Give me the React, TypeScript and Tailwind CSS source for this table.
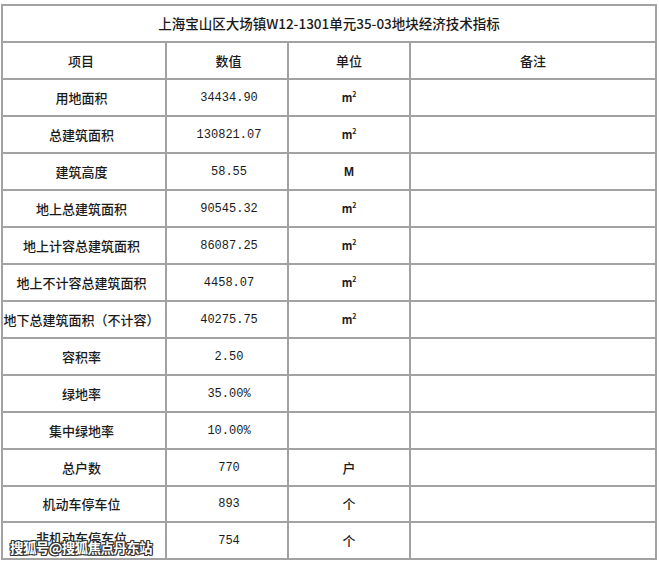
import React from 'react';

type Row = { name: string; value: string; unit: React.ReactNode; short?: boolean; lift?: boolean };

const sqm = (
  <span className="font-bold text-[11px]">
    m<sup className="text-[7px] -top-[5px]">2</sup>
  </span>
);

const rows: Row[] = [
  { name: '用地面积', value: '34434.90', unit: sqm },
  { name: '总建筑面积', value: '130821.07', unit: sqm },
  { name: '建筑高度', value: '58.55', unit: <span className="font-bold text-[12px] [font-family:'Liberation_Sans_Narrow','Liberation_Sans',sans-serif]">M</span> },
  { name: '地上总建筑面积', value: '90545.32', unit: sqm },
  { name: '地上计容总建筑面积', value: '86087.25', unit: sqm },
  { name: '地上不计容总建筑面积', value: '4458.07', unit: sqm },
  { name: '地下总建筑面积（不计容）', value: '40275.75', unit: sqm },
  { name: '容积率', value: '2.50', unit: '' },
  { name: '绿地率', value: '35.00%', unit: '' },
  { name: '集中绿地率', value: '10.00%', unit: '' },
  { name: '总户数', value: '770', unit: '户' },
  { name: '机动车停车位', value: '893', unit: '个', short: true },
  { name: '非机动车停车位', value: '754', unit: '个', lift: true },
];

const cell = 'bg-white flex items-center justify-center whitespace-nowrap';

export default function App() {
  return (
    <div className="relative w-[660px] h-[561px] bg-white overflow-hidden text-[#1a1a1a] [font-family:'Noto_Sans_CJK_SC',sans-serif]">
      <div className="ml-[1px] mt-[4px] w-[656px] grid grid-cols-[162px_120px_120px_244px] gap-[2px] p-[2px] bg-[#a2a2a2]">
        <div className={`${cell} col-span-4 h-[35px] text-[13.5px] font-medium`}>
          上海宝山区大场镇W12-1301单元35-03地块经济技术指标
        </div>
        <div className={`${cell} h-[35px] text-[13px] font-medium pr-[6px]`}>项目</div>
        <div className={`${cell} h-[35px] text-[13px] font-medium pl-[3px]`}>数值</div>
        <div className={`${cell} h-[35px] text-[13px] font-medium`}>单位</div>
        <div className={`${cell} h-[35px] text-[13px] font-medium`}>备注</div>
        {rows.map((r) => {
          const h = r.short ? 'h-[34px]' : 'h-[35px]';
          return (
            <React.Fragment key={r.name}>
              <div className={`${cell} ${h} text-[13px] font-medium overflow-visible pr-[5px] ${r.lift ? 'pb-[6px]' : ''}`}>{r.name}</div>
              <div className={`${cell} ${h} text-[12px] pl-[4px] [font-family:'Liberation_Mono',monospace]`}>{r.value}</div>
              <div className={`${cell} ${h} text-[13px] font-medium`}>{r.unit}</div>
              <div className={`${cell} ${h}`} />
            </React.Fragment>
          );
        })}
      </div>
      {/* watermark */}
      <div className="absolute left-[10px] top-[541px] text-[13.5px] font-bold text-white leading-none tracking-[-0.6px] [text-shadow:1px_1px_0_#333,-1px_-1px_0_#333,1px_-1px_0_#333,-1px_1px_0_#333,0_1px_0_#333,0_-1px_0_#333,1px_0_0_#333,-1px_0_0_#333]">
        搜狐号@搜狐焦点丹东站
      </div>
    </div>
  );
}
